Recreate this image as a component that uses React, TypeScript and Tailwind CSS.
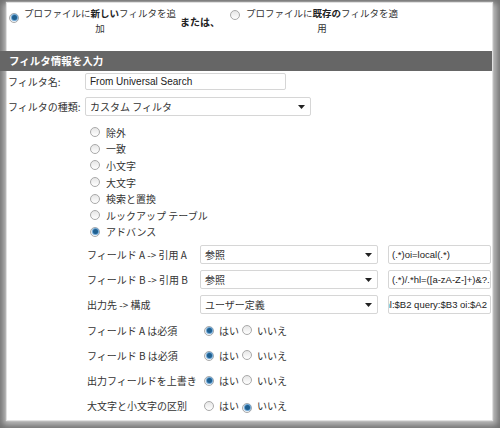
import React from "react";

const font = { fontFamily: '"Noto Sans CJK JP", "Liberation Sans", sans-serif' };

function Radio({ on }: { on?: boolean }) {
  return (
    <span className="inline-flex h-[10px] w-[10px] shrink-0 items-center justify-center rounded-full border border-[#a9a9a9] bg-gradient-to-b from-[#e6e6e6] to-[#ffffff]">
      {on && <span className="h-[5px] w-[5px] rounded-full bg-[#1f5f8f] shadow-[0_0_1px_1px_#5a9bd0]" />}
    </span>
  );
}

function Select({ value, w }: { value: string; w: string }) {
  return (
    <div className={`flex h-[19px] shrink-0 items-center justify-between rounded-[2px] border border-[#d6d6d6] bg-white pl-[4px] pr-[5px] ${w}`}>
      <span>{value}</span>
      <svg width="7" height="4" viewBox="0 0 7 4"><path d="M0 0h7L3.5 4z" fill="#222" /></svg>
    </div>
  );
}

function YesNo({ yes }: { yes: boolean }) {
  return (
    <div className="flex items-center">
      <Radio on={yes} />
      <span className="ml-[5px]">はい</span>
      <span className="ml-[3px]"><Radio on={!yes} /></span>
      <span className="ml-[5px]">いいえ</span>
    </div>
  );
}

export default function App() {
  const types = ["除外", "一致", "小文字", "大文字", "検索と置換", "ルックアップ テーブル", "アドバンス"];
  const fields: [string, string, string, string][] = [
    ["フィールド A -> 引用 A", "参照", "(.*)oi=local(.*)", "start"],
    ["フィールド B -> 引用 B", "参照", "(.*)/.*hl=([a-zA-Z-]+)&?.*", "start"],
    ["出力先 -> 構成", "ユーザー定義", "hl:$B2 query:$B3 oi:$A2", "end"],
  ];
  const reqs: [string, boolean][] = [
    ["フィールド A は必須", true],
    ["フィールド B は必須", true],
    ["出力フィールドを上書き", true],
    ["大文字と小文字の区別", false],
  ];
  return (
    <div
      className="h-[428px] w-[500px] overflow-hidden bg-[#bdbdbd] pl-[7px] pt-[3px] pr-[8px] pb-[8px] text-[10px] text-[#333] shadow-[inset_0_0_6px_3px_#6e6e6e]"
      style={font}
    >
      <div className="h-full w-full bg-white shadow-[0_0_1px_1px_#e0e0e0]">
        {/* top choice row */}
        <div className="flex h-[48px] items-start pl-[2px] pt-[3px] text-[9.5px] leading-[15px]">
          <div className="mt-[3px]"><Radio on /></div>
          <div className="ml-[4px] w-[154px] text-center">
            プロファイルに<b className="text-[#222]">新しい</b>フィルタを追加
          </div>
          <div className="ml-[3px] mt-[8px] text-[10px] font-bold text-[#222]">または、</div>
          <div className="ml-[10px] mt-[3px]"><Radio /></div>
          <div className="ml-[4px] w-[156px] text-center">
            プロファイルに<b className="text-[#222]">既存の</b>フィルタを適用
          </div>
        </div>

        {/* header bar */}
        <div className="-ml-[7px] flex h-[20px] items-center bg-[#666666] pl-[9px] text-[10.5px] font-bold text-white">
          フィルタ情報を入力
        </div>

        {/* name */}
        <div className="mt-[2px] flex h-[17px] items-center">
          <div className="w-[78px] pl-[1px]">フィルタ名:</div>
          <div className="flex h-[17px] w-[201px] items-center rounded-[2px] border border-[#d6d6d6] pl-[4px] text-[#222]" style={{ fontFamily: '"Liberation Sans", sans-serif' }}>
            From Universal Search
          </div>
        </div>

        {/* type */}
        <div className="mt-[7px] flex h-[19px] items-center">
          <div className="w-[78px] pl-[1px]">フィルタの種類:</div>
          <Select value="カスタム フィルタ" w="w-[226px]" />
        </div>

        {/* type radios */}
        <div className="mt-[8px] flex flex-col pl-[83px]">
          {types.map((t, i) => (
            <div key={t} className="flex h-[16.6px] items-center">
              <Radio on={i === types.length - 1} />
              <span className="ml-[6px]">{t}</span>
            </div>
          ))}
        </div>

        {/* field rows */}
        <div className="mt-[5px] flex flex-col gap-[6px]">
          {fields.map(([label, sel, val, align]) => (
            <div key={label} className="flex h-[19px] items-center">
              <div className="w-[193px] shrink-0 whitespace-nowrap pl-[80px]">{label}</div>
              <Select value={sel} w="w-[178px]" />
              <div
                className={`ml-[10px] flex h-[19px] w-[103px] shrink-0 items-center overflow-hidden whitespace-nowrap rounded-[2px] border border-[#d6d6d6] px-[3px] text-[9.5px] text-[#222] ${align === "end" ? "justify-end" : "justify-start"}`}
                style={{ fontFamily: '"Liberation Sans", sans-serif' }}
              >
                <span className="shrink-0">{val}</span>
              </div>
            </div>
          ))}
        </div>

        {/* required rows */}
        <div className="mt-[4px] flex flex-col">
          {reqs.map(([label, yes]) => (
            <div key={label} className="flex h-[25px] items-center">
              <div className="w-[197px] shrink-0 pl-[80px]">{label}</div>
              <YesNo yes={yes} />
            </div>
          ))}
        </div>
      </div>
    </div>
  );
}
